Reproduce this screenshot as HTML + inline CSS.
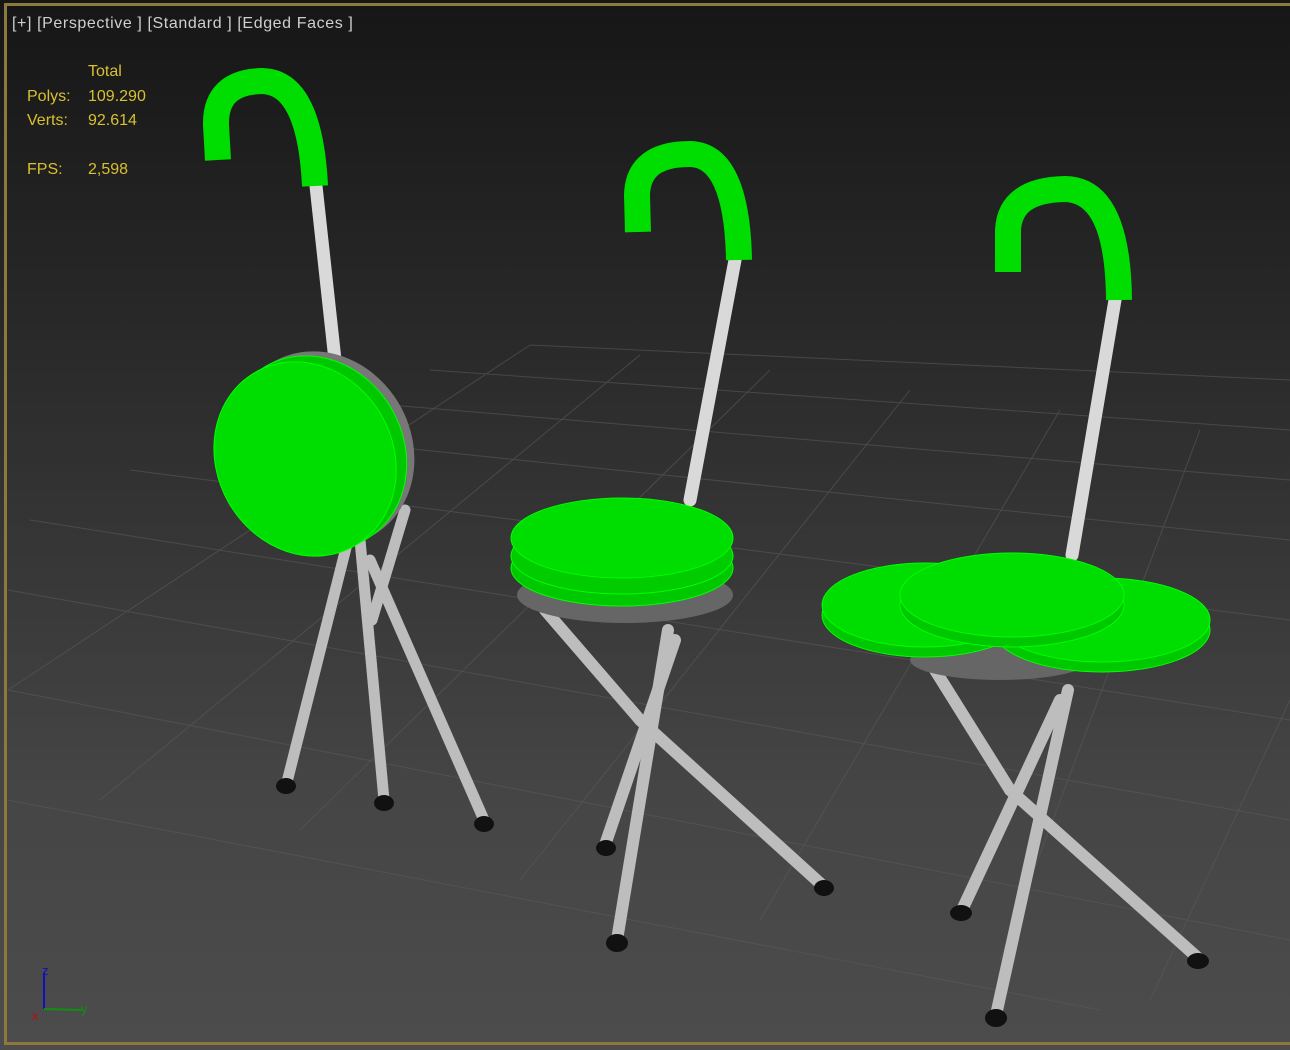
<!DOCTYPE html>
<html><head><style>
html,body{margin:0;padding:0;width:1290px;height:1050px;overflow:hidden;background:#2a2a2a}
.vp{position:absolute;left:0;top:0;width:1290px;height:1050px;background:linear-gradient(#161616 0%,#2b2b2b 35%,#454545 75%,#4c4c4c 100%)}
.brd{position:absolute;left:4px;top:3px;width:1290px;height:1042px;border:3px solid #8c7a3c;box-sizing:border-box;border-right:none}
.t{position:absolute;font-family:"Liberation Sans",sans-serif;font-size:16px;white-space:pre}
.lbl{color:#cfcfcf;left:12px;top:15px;letter-spacing:0.6px}
.y{color:#d8c030}
</style></head><body>
<div class="vp"></div>
<svg width="1290" height="1050" style="position:absolute;left:0;top:0">
<g stroke="#5a5a5a" stroke-width="1" fill="none" opacity="0.6">
<line x1="8" y1="800" x2="1100" y2="1010"/>
<line x1="8" y1="690" x2="1290" y2="940"/>
<line x1="8" y1="590" x2="1290" y2="820"/>
<line x1="30" y1="520" x2="1290" y2="720"/>
<line x1="130" y1="470" x2="1290" y2="620"/>
<line x1="230" y1="430" x2="1290" y2="540"/>
<line x1="330" y1="400" x2="1290" y2="480"/>
<line x1="430" y1="370" x2="1290" y2="430"/>
<line x1="530" y1="345" x2="1290" y2="380"/>
<line x1="530" y1="345" x2="8" y2="690"/>
<line x1="640" y1="355" x2="100" y2="800"/>
<line x1="770" y1="370" x2="300" y2="830"/>
<line x1="910" y1="390" x2="520" y2="880"/>
<line x1="1060" y1="410" x2="760" y2="920"/>
<line x1="1200" y1="430" x2="1000" y2="960"/>
<line x1="1290" y1="700" x2="1150" y2="1000"/>
</g>
<g stroke-linecap="round" fill="none">
<g stroke="#bdbdbd" stroke-width="11">
<line x1="348" y1="540" x2="287" y2="782"/>
<line x1="360" y1="540" x2="384" y2="800"/>
<line x1="370" y1="560" x2="484" y2="820"/>
<line x1="405" y1="510" x2="372" y2="620"/>
</g>
<g stroke="#bdbdbd" stroke-width="12">
<line x1="545" y1="610" x2="640" y2="720"/>
<line x1="640" y1="720" x2="822" y2="885"/>
<line x1="668" y1="630" x2="617" y2="940"/>
<line x1="675" y1="640" x2="605" y2="845"/>
</g>
<g stroke="#bdbdbd" stroke-width="12">
<line x1="935" y1="670" x2="1010" y2="790"/>
<line x1="1010" y1="790" x2="1198" y2="958"/>
<line x1="1068" y1="690" x2="996" y2="1015"/>
<line x1="1060" y1="700" x2="962" y2="910"/>
</g>
<g stroke="#d9d9d9" stroke-width="13">
<line x1="316" y1="186" x2="335" y2="360"/>
<line x1="735" y1="260" x2="690" y2="500"/>
<line x1="1115" y1="300" x2="1072" y2="555"/>
</g>
<g stroke="#00dd00" stroke-width="26" stroke-linecap="butt">
<path d="M218 160 L216 125 Q215 82 262 81 Q310 82 315 186"/>
<path d="M638 232 L637 195 Q638 154 690 154 Q737 155 739 260"/>
<path d="M1008 272 L1008 230 Q1010 190 1065 189 Q1118 190 1119 300"/>
</g>
</g>
<g fill="#111">
<ellipse cx="286" cy="786" rx="10" ry="8"/><ellipse cx="384" cy="803" rx="10" ry="8"/><ellipse cx="484" cy="824" rx="10" ry="8"/>
<ellipse cx="606" cy="848" rx="10" ry="8"/><ellipse cx="617" cy="943" rx="11" ry="9"/><ellipse cx="824" cy="888" rx="10" ry="8"/>
<ellipse cx="961" cy="913" rx="11" ry="8"/><ellipse cx="996" cy="1018" rx="11" ry="9"/><ellipse cx="1198" cy="961" rx="11" ry="8"/>
</g>
<g transform="rotate(-30 312 455)">
<ellipse cx="325" cy="455" rx="88" ry="100" fill="#777"/>
<ellipse cx="316" cy="455" rx="88" ry="100" fill="#00c800" stroke="#00ff00"/>
<ellipse cx="304" cy="455" rx="88" ry="100" fill="#00dd00" stroke="#00ff00"/>
</g>
<ellipse cx="625" cy="595" rx="108" ry="28" fill="#666"/>
<ellipse cx="622" cy="568" rx="111" ry="38" fill="#00c800" stroke="#00ff00"/>
<ellipse cx="622" cy="556" rx="111" ry="38" fill="#00cc00" stroke="#00ff00"/>
<ellipse cx="622" cy="538" rx="111" ry="40" fill="#00dd00" stroke="#00ff00"/>
<ellipse cx="1000" cy="660" rx="90" ry="20" fill="#666"/>
<ellipse cx="925" cy="615" rx="103" ry="42" fill="#00c800" stroke="#00ff00"/>
<ellipse cx="925" cy="605" rx="103" ry="42" fill="#00dd00" stroke="#00ff00"/>
<ellipse cx="1102" cy="630" rx="108" ry="42" fill="#00c800" stroke="#00ff00"/>
<ellipse cx="1102" cy="620" rx="108" ry="42" fill="#00dd00" stroke="#00ff00"/>
<ellipse cx="1012" cy="605" rx="112" ry="42" fill="#00c800" stroke="#00ff00"/>
<ellipse cx="1012" cy="595" rx="112" ry="42" fill="#00dd00" stroke="#00ff00"/>
<line x1="44" y1="1009" x2="44" y2="973" stroke="#1010c0" stroke-width="2"/>
<line x1="44" y1="1009" x2="82" y2="1010" stroke="#109010" stroke-width="2"/>
<text x="42" y="975" fill="#1010c0" font-family="Liberation Sans" font-size="13">z</text>
<text x="81" y="1013" fill="#109010" font-family="Liberation Sans" font-size="13">y</text>
<text x="32" y="1020" fill="#b01010" font-family="Liberation Sans" font-size="13">x</text>
</svg>
<div class="brd"></div>
<div class="t lbl">[+] [Perspective ] [Standard ] [Edged Faces ]</div>
<div class="t y" style="left:88px;top:63px">Total</div>
<div class="t y" style="left:27px;top:88px">Polys:</div><div class="t y" style="left:88px;top:88px">109.290</div>
<div class="t y" style="left:27px;top:112px">Verts:</div><div class="t y" style="left:88px;top:112px">92.614</div>
<div class="t y" style="left:27px;top:161px">FPS:</div><div class="t y" style="left:88px;top:161px">2,598</div>
</body></html>
